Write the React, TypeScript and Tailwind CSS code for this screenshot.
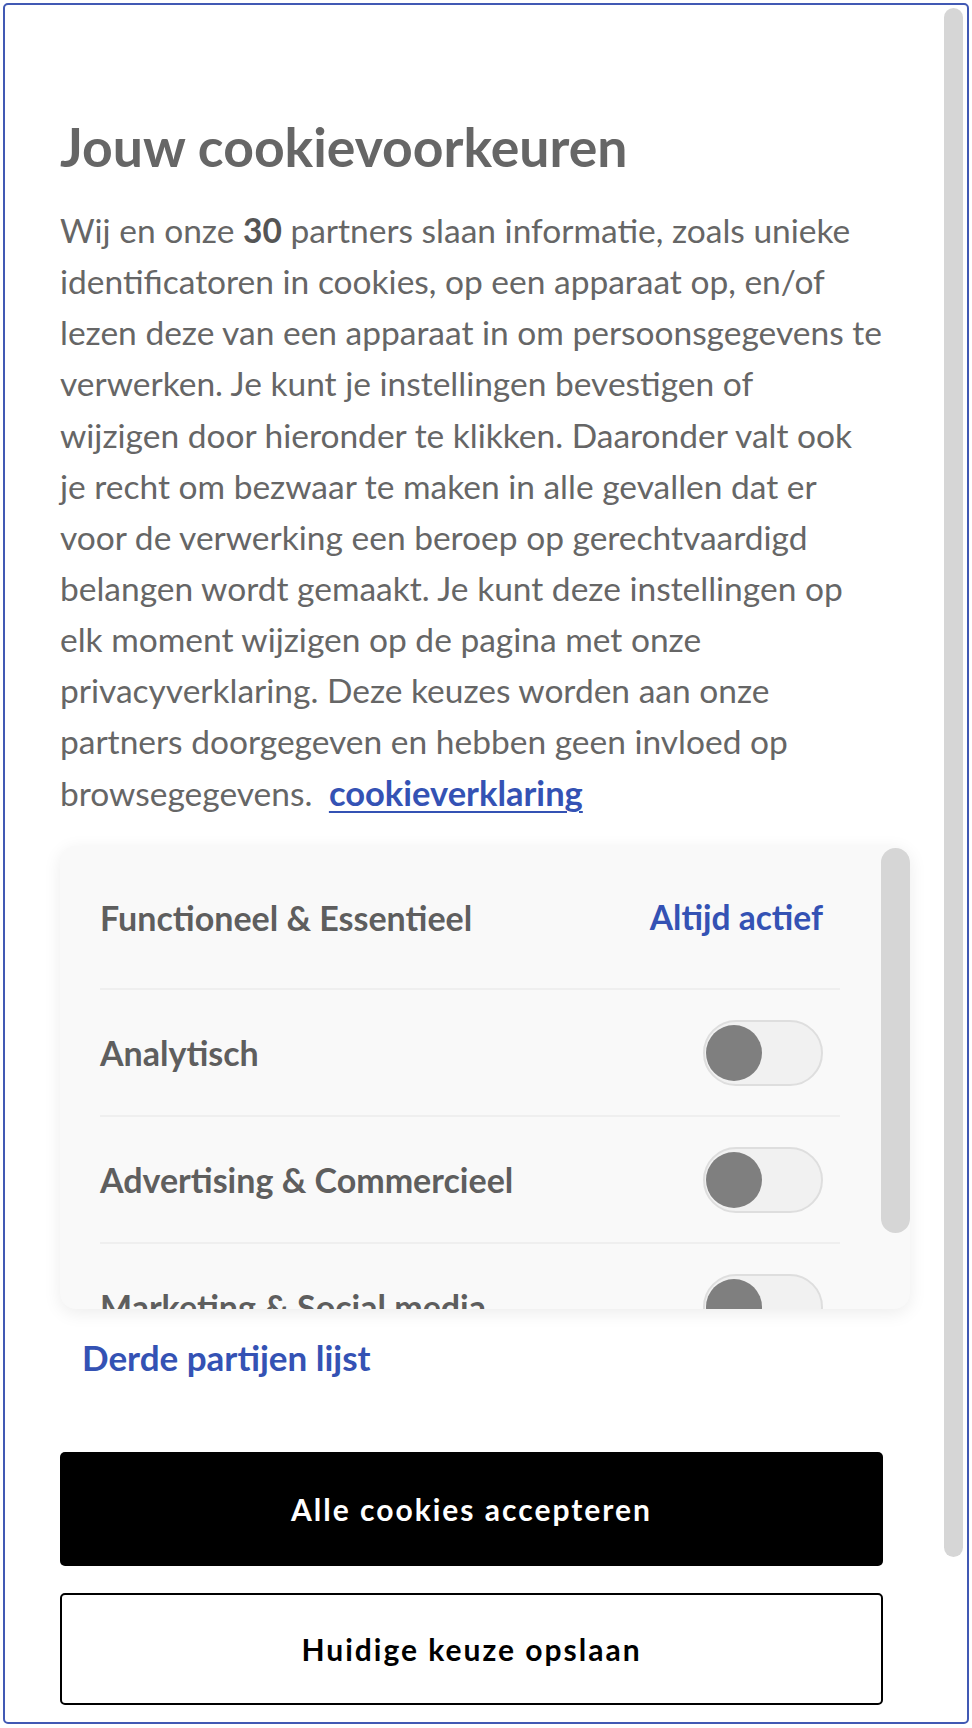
import React from 'react';

const ROWS = [
  { label: 'Analytisch' },
  { label: 'Advertising & Commercieel' },
  { label: 'Marketing & Social media' },
];

// line breaks follow the screenshot
const BODY = [
  'identificatoren in cookies, op een apparaat op, en/of',
  'lezen deze van een apparaat in om persoonsgegevens te',
  'verwerken. Je kunt je instellingen bevestigen of',
  'wijzigen door hieronder te klikken. Daaronder valt ook',
  'je recht om bezwaar te maken in alle gevallen dat er',
  'voor de verwerking een beroep op gerechtvaardigd',
  'belangen wordt gemaakt. Je kunt deze instellingen op',
  'elk moment wijzigen op de pagina met onze',
  'privacyverklaring. Deze keuzes worden aan onze',
  'partners doorgegeven en hebben geen invloed op',
];

function Toggle() {
  return (
    <span className="flex h-[66px] w-[120px] shrink-0 items-center rounded-full border-2 border-[#dedede] bg-[#f1f1f1]">
      <span className="ml-px h-[56px] w-[56px] rounded-full bg-[#7f7f7f]" />
    </span>
  );
}

export default function App() {
  return (
    <div
      className="m-[3px] flex h-[1721px] w-[966px] overflow-hidden rounded-[5px] border-2 border-[#4159b4] bg-white"
      style={{ fontFamily: 'Lato, "Noto Sans", sans-serif' }}
    >
      <div className="min-w-0 flex-1 pl-[55px] pr-[61px] pt-[109px]">
        <h1 className="text-[53.5px] font-bold leading-[1.2] text-[#666]">
          Jouw cookievoorkeuren
        </h1>
        <p className="mt-[27px] text-[33.5px] leading-[51.1px] text-[#666]">
          <span className="block whitespace-nowrap">
            Wij en onze <b className="font-bold text-[#555]">30</b> partners slaan informatie, zoals unieke
          </span>
          {BODY.map((l) => (
            <span key={l} className="block whitespace-nowrap">
              {l}
            </span>
          ))}
          <span className="block whitespace-nowrap">
            browsegegevens.&nbsp;
            <a
              href="#"
              className="ml-[8px] text-[34.5px] font-bold text-[#3452b4] underline decoration-2 underline-offset-[5px]"
            >
              cookieverklaring
            </a>
          </span>
        </p>

        <div className="mt-[27px] flex h-[463px] w-[850px] overflow-hidden rounded-[16px] bg-[#f9f9f9] shadow-[0_4px_18px_rgba(0,0,0,0.08)]">
          <div className="ml-[40px] w-[740px] shrink-0">
            <div className="flex h-[144px] items-center justify-between border-b-2 border-[#efefef] pr-[17px]">
              <span className="text-[34px] font-bold text-[#5e5e5e]">Functioneel &amp; Essentieel</span>
              <span className="text-[33.5px] font-bold text-[#3452b4]">Altijd actief</span>
            </div>
            {ROWS.map((r) => (
              <div
                key={r.label}
                className="flex h-[127px] items-center justify-between border-b-2 border-[#efefef] pr-[17px]"
              >
                <span className="text-[34px] font-bold text-[#5e5e5e]">{r.label}</span>
                <Toggle />
              </div>
            ))}
          </div>
          <div className="ml-auto pt-[2px]">
            <div className="h-[385px] w-[29px] rounded-full bg-[#d6d6d6]" />
          </div>
        </div>

        <a href="#" className="ml-[22px] mt-[27px] block text-[35px] font-bold leading-[1.2] text-[#3452b4]">
          Derde partijen lijst
        </a>

        <button
          type="button"
          className="mt-[74px] flex h-[114px] w-full items-center justify-center rounded-[5px] bg-black text-[30px] font-bold tracking-[2px] text-white"
        >
          Alle cookies accepteren
        </button>
        <button
          type="button"
          className="mt-[27px] flex h-[112px] w-full items-center justify-center rounded-[5px] border-[2.5px] border-black bg-white text-[30px] font-bold tracking-[2px] text-black"
        >
          Huidige keuze opslaan
        </button>
      </div>

      <div className="w-[23px] shrink-0 pt-[3px]">
        <div className="h-[1549px] w-[19px] rounded-[10px] bg-[#d6d6d6]" />
      </div>
    </div>
  );
}
